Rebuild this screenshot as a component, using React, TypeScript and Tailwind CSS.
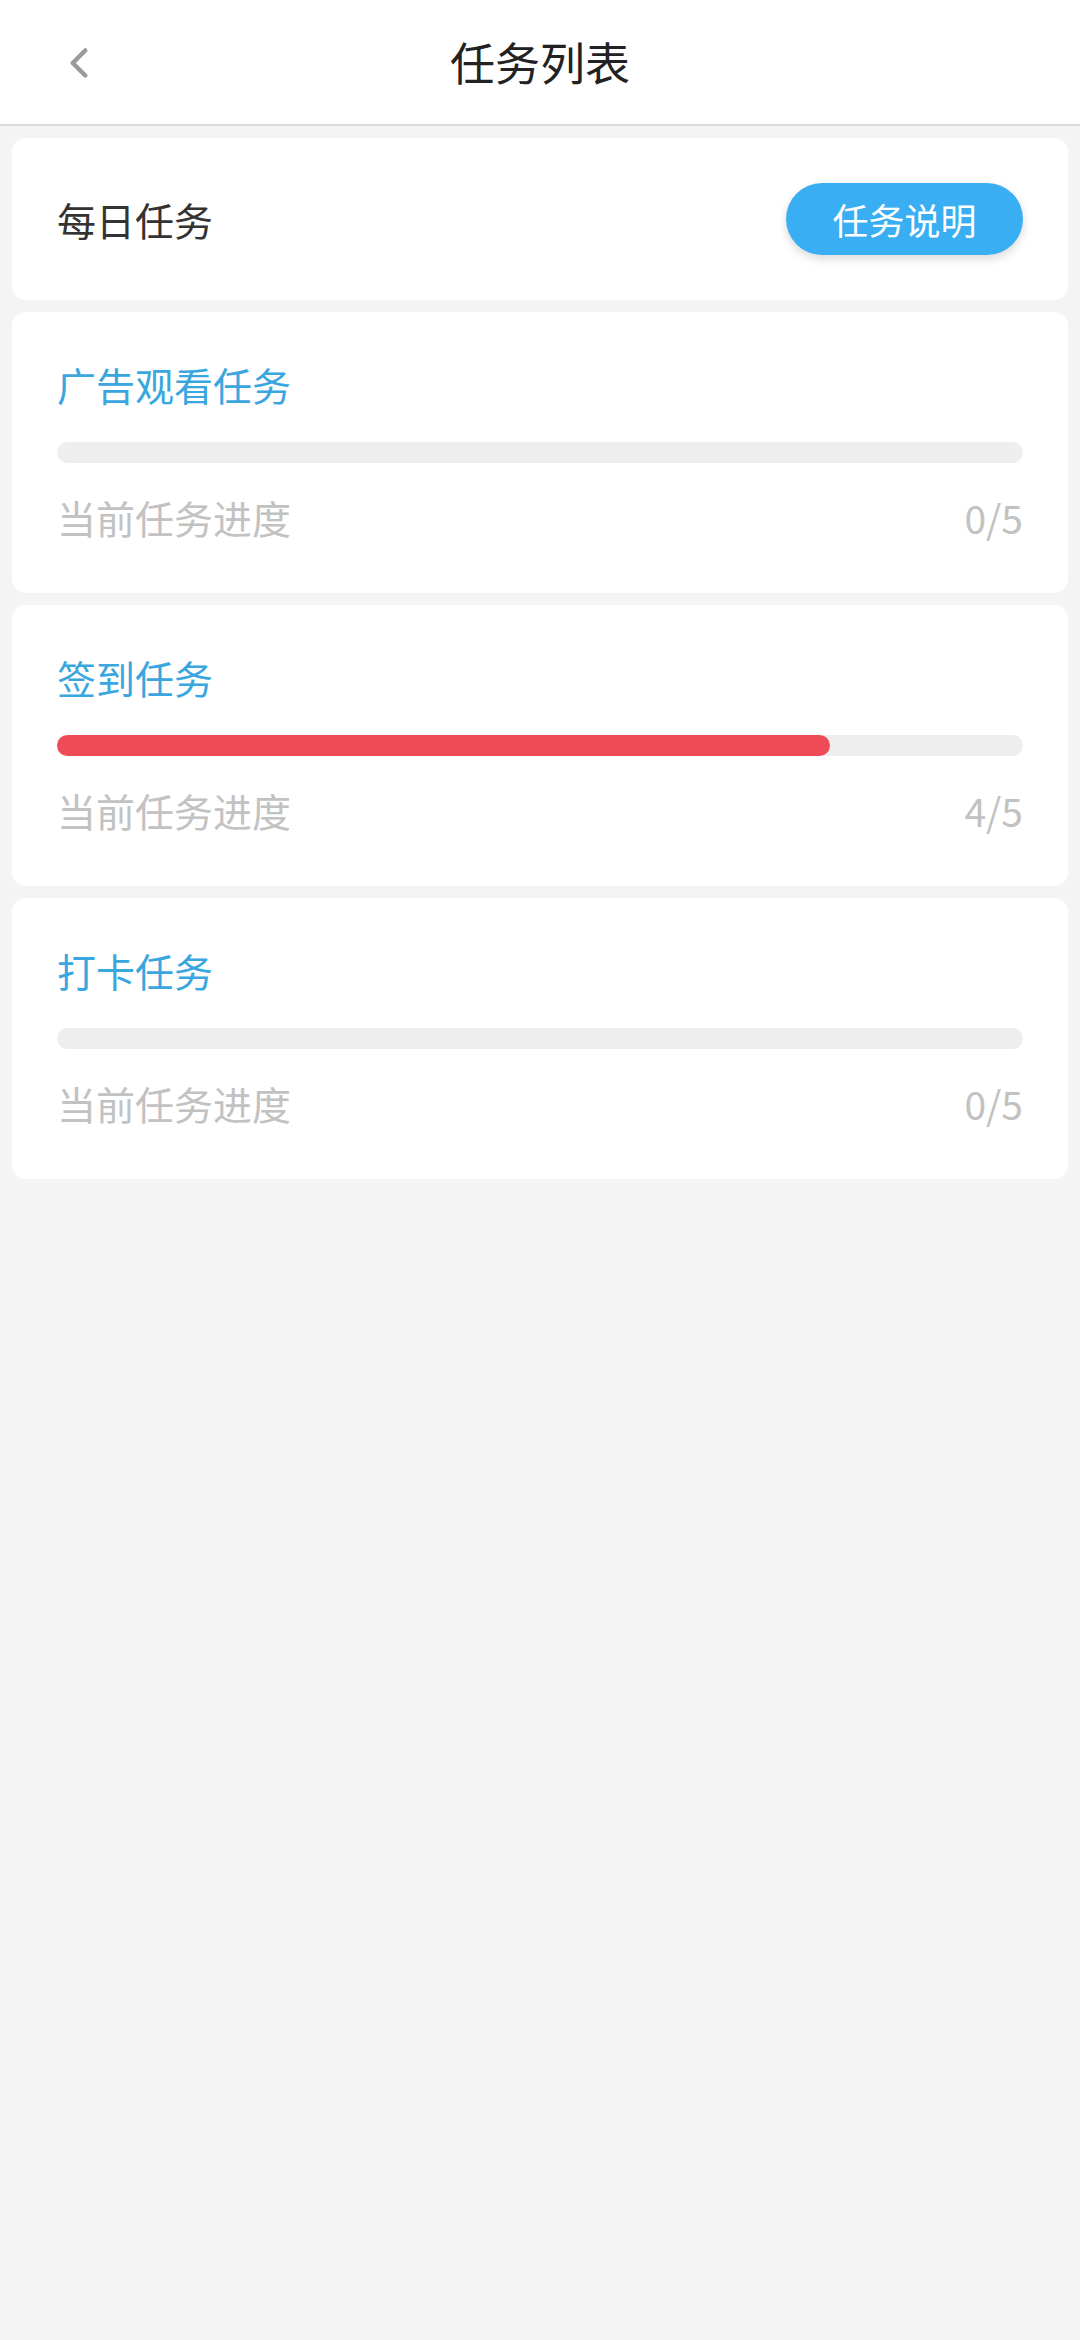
import { ChevronLeft } from "lucide-react";

const TASKS = [
  { name: "广告观看任务", done: 0, total: 5 },
  { name: "签到任务", done: 4, total: 5 },
  { name: "打卡任务", done: 0, total: 5 },
];

const font = { fontFamily: '"Noto Sans CJK SC", "Noto Sans", sans-serif' };

function TaskCard({ name, done, total }: { name: string; done: number; total: number }) {
  const pct = (done / total) * 100;
  return (
    <div className="rounded-[14px] bg-white px-[45px] pt-[44px] pb-[48px]">
      <div className="text-[39px] leading-[56px] text-[#3aa6e0]">{name}</div>
      <div className="mt-[30px] h-[21px] w-full rounded-full bg-[#eeeeee]">
        {done > 0 && <div className="h-full rounded-full bg-[#ef4b57]" style={{ width: `${pct}%` }} />}
      </div>
      <div className="mt-[26px] flex items-center justify-between text-[39px] leading-[56px] text-[#c2c2c2]">
        <span>当前任务进度</span>
        <span>{done}/{total}</span>
      </div>
    </div>
  );
}

export default function App() {
  return (
    <div className="min-h-[2340px] bg-[#f4f4f4]" style={font}>
      <header className="relative flex h-[126px] items-center justify-center border-b-2 border-[#dcdcdc] bg-white">
        <button className="absolute left-[54px] top-[38px] text-[#9a9a9a]">
          <ChevronLeft className="h-[50px] w-[50px]" strokeWidth={2.2} />
        </button>
        <h1 className="text-[45px] text-[#222222]">任务列表</h1>
      </header>

      <div className="flex flex-col gap-[12px] px-[12px] pt-[12px]">
        <div className="flex h-[162px] items-center justify-between rounded-[14px] bg-white pl-[45px] pr-[45px]">
          <span className="text-[39px] text-[#333333]">每日任务</span>
          <button className="h-[72px] w-[237px] rounded-full bg-[#3aaef2] text-[36px] text-white shadow-[0_4px_10px_rgba(0,0,0,0.15)]">
            任务说明
          </button>
        </div>
        {TASKS.map((t) => (
          <TaskCard key={t.name} {...t} />
        ))}
      </div>
    </div>
  );
}
